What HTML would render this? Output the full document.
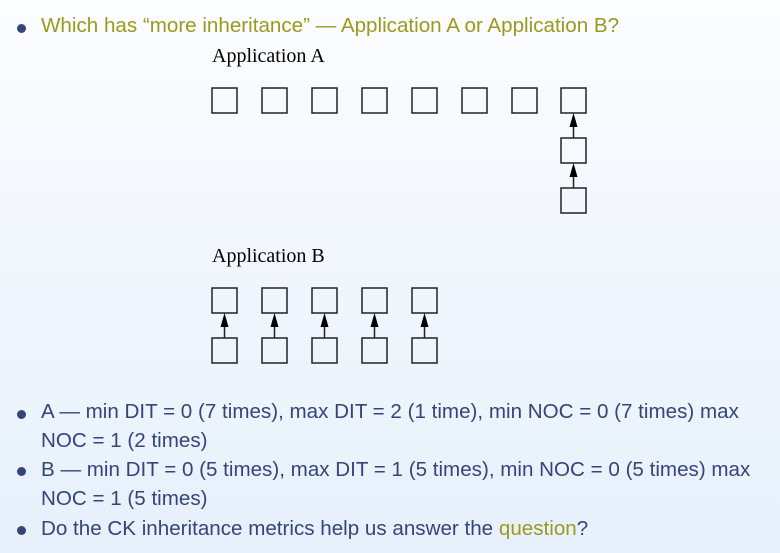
<!DOCTYPE html>
<html><head><style>
body{margin:0;width:780px;height:553px;overflow:hidden;background:linear-gradient(#fcfdff,#e6f0fb);font-family:"Liberation Sans",sans-serif;position:relative}
.t{position:absolute;left:41px;font-size:20.6px;color:#34457a;white-space:nowrap;line-height:22px}
.o{color:#9a9a1c}
.b{position:absolute;left:17px;width:9px;height:9px;border-radius:50%;background:#34457a}
.s{position:absolute;font-family:"Liberation Serif",serif;font-size:20px;color:#000}
</style></head><body>
<div class="b" style="top:24px"></div>
<div class="t o" style="top:15px">Which has “more inheritance” — Application A or Application B?</div>
<div class="s" style="left:212px;top:45px">Application A</div>
<div class="s" style="left:212px;top:245px">Application B</div>
<svg width="780" height="553" style="position:absolute;left:0;top:0">
<g fill="none" stroke="#222" stroke-width="1.5">
<rect x="212" y="88" width="25" height="25"/><rect x="262" y="88" width="25" height="25"/><rect x="312" y="88" width="25" height="25"/><rect x="362" y="88" width="25" height="25"/><rect x="412" y="88" width="25" height="25"/><rect x="462" y="88" width="25" height="25"/><rect x="512" y="88" width="25" height="25"/><rect x="561" y="88" width="25" height="25"/>
<rect x="561" y="138" width="25" height="25"/><rect x="561" y="188" width="25" height="25"/>
<rect x="212" y="288" width="25" height="25"/><rect x="262" y="288" width="25" height="25"/><rect x="312" y="288" width="25" height="25"/><rect x="362" y="288" width="25" height="25"/><rect x="412" y="288" width="25" height="25"/>
<rect x="212" y="338" width="25" height="25"/><rect x="262" y="338" width="25" height="25"/><rect x="312" y="338" width="25" height="25"/><rect x="362" y="338" width="25" height="25"/><rect x="412" y="338" width="25" height="25"/>
<path d="M573.5 138V124M573.5 188V174M224.5 338V324M274.5 338V324M324.5 338V324M374.5 338V324M424.5 338V324"/>
</g>
<g fill="#000">
<path d="M573.5 113l-4 14h8z"/><path d="M573.5 163l-4 14h8z"/>
<path d="M224.5 313l-4 14h8z"/><path d="M274.5 313l-4 14h8z"/><path d="M324.5 313l-4 14h8z"/><path d="M374.5 313l-4 14h8z"/><path d="M424.5 313l-4 14h8z"/>
</g>
</svg>
<div class="b" style="top:410px"></div>
<div class="t" style="top:401px">A — min DIT = 0 (7 times), max DIT = 2 (1 time), min NOC = 0 (7 times) max</div>
<div class="t" style="top:430px">NOC = 1 (2 times)</div>
<div class="b" style="top:467px"></div>
<div class="t" style="top:459px">B — min DIT = 0 (5 times), max DIT = 1 (5 times), min NOC = 0 (5 times) max</div>
<div class="t" style="top:488px">NOC = 1 (5 times)</div>
<div class="b" style="top:526px"></div>
<div class="t" style="top:518px">Do the CK inheritance metrics help us answer the <span class="o">question</span>?</div>
</body></html>
